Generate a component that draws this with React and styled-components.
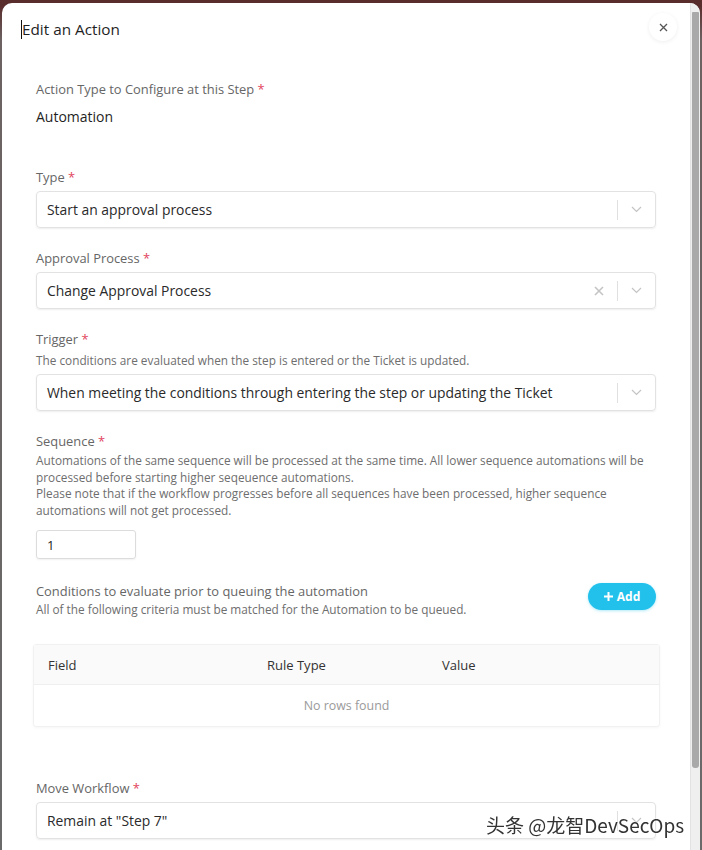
import React from "react";
import styled, { createGlobalStyle } from "styled-components";

const Global = createGlobalStyle`
  html, body { margin: 0; padding: 0; }
  body {
    background: linear-gradient(to bottom, #5a2d2d 0, #5a2d2d 6px, #6c6262 40px, #6a6a6a 100%);
    font-family: "Open Sans", "Noto Sans", sans-serif;
    height: 850px;
    overflow: hidden;
  }
  * { box-sizing: border-box; }
`;

const Modal = styled.div`
  position: relative;
  margin: 3px 2px 0 2px;
  height: 847px;
  background: #fff;
  border-radius: 10px 10px 0 0;
  overflow: hidden;
  display: flex;
`;

const Content = styled.div`
  flex: 1;
  min-width: 0;
  overflow: hidden;
`;

const ScrollTrack = styled.div`
  width: 10px;
  background: #efefef;
  border-left: 1px solid #e2e2e2;
  padding: 9px 1px 0 1px;
  display: flex;
  flex-direction: column;
`;

const ScrollThumb = styled.div`
  height: 756px;
  background: #a9a9a9;
  border-radius: 1px 1px 3px 3px;
`;

const Header = styled.div`
  display: flex;
  align-items: center;
  justify-content: space-between;
  height: 56px;
  padding: 0 13px 4px 19px;
`;

const Title = styled.h2`
  margin: 0;
  display: flex;
  align-items: center;
  font-size: 15.3px;
  font-weight: 400;
  color: #1f1f1f;
`;

const Caret = styled.span`
  display: inline-block;
  width: 1px;
  height: 19px;
  background: #111;
`;

const CloseBtn = styled.button`
  width: 28px;
  height: 28px;
  margin-bottom: 4px;
  border: none;
  border-radius: 50%;
  background: #fff;
  box-shadow: 0 1px 4px rgba(0, 0, 0, 0.07);
  display: flex;
  align-items: center;
  justify-content: center;
  padding: 0;
  color: #555;
`;

const Body = styled.div`
  padding: 21px 34px 110px 34px;
  display: flex;
  flex-direction: column;
`;

const Label = styled.div`
  font-size: 12.9px;
  line-height: 18px;
  color: #666;
  margin-top: ${(p) => p.$mt || 0}px;
  white-space: nowrap;
`;

const Req = styled.span`
  color: #e2445c;
`;

const Value = styled.div`
  font-size: 14px;
  line-height: 20px;
  color: #1f1f1f;
  margin-top: 9px;
`;

const Hint = styled.div`
  font-size: 11.8px;
  line-height: ${(p) => p.$lh || 16}px;
  color: #6e6e6e;
  margin-top: ${(p) => p.$mt || 0}px;
`;

const SelectBox = styled.div`
  margin-top: ${(p) => p.$mt ?? 5}px;
  height: 37px;
  border: 1px solid #e2e2e2;
  border-radius: 4px;
  box-shadow: 0 1px 2px rgba(0, 0, 0, 0.07);
  display: flex;
  align-items: center;
  padding-left: 10px;
  font-size: 13.9px;
  color: #2a2a2a;
`;

const SelectText = styled.span`
  flex: 1;
  white-space: nowrap;
`;

const IconSlot = styled.span`
  display: flex;
  align-items: center;
  justify-content: center;
  width: ${(p) => p.$w}px;
  height: 100%;
  color: #c4c4c4;
`;

const Sep = styled.span`
  width: 1px;
  height: 20px;
  background: #e0e0e0;
`;

const NumInput = styled.div`
  margin-top: 12px;
  width: 100px;
  height: 29px;
  border: 1px solid #dcdcdc;
  border-radius: 3px;
  box-shadow: 0 1px 2px rgba(0, 0, 0, 0.06);
  padding-left: 10px;
  display: flex;
  align-items: center;
  font-size: 13px;
  color: #222;
`;

const CondRow = styled.div`
  display: flex;
  justify-content: space-between;
  align-items: flex-start;
  margin-top: 23px;
`;

const AddBtn = styled.button`
  margin-top: 1px;
  height: 27px;
  width: 68px;
  border: none;
  border-radius: 14px;
  background: #22c1ec;
  color: #fff;
  font-family: inherit;
  font-weight: 700;
  font-size: 12px;
  display: flex;
  align-items: center;
  justify-content: center;
  gap: 4px;
  box-shadow: 0 1px 3px rgba(34, 193, 236, 0.35);
`;

const Table = styled.div`
  margin: 27px -4px 0 -3px;
  border: 1px solid #f1f1f1;
  border-radius: 3px;
  box-shadow: 0 1px 3px rgba(0, 0, 0, 0.04);
`;

const HeadRow = styled.div`
  display: grid;
  grid-template-columns: 219px 175px 1fr;
  height: 40px;
  align-items: center;
  background: #fafafa;
  border-bottom: 1px solid #efefef;
  font-size: 13px;
  color: #333;
`;

const HeadCell = styled.div`
  padding-left: 14px;
`;

const Empty = styled.div`
  height: 41px;
  display: flex;
  align-items: center;
  justify-content: center;
  font-size: 12.4px;
  color: #9a9a9a;
`;

const Watermark = styled.div`
  position: fixed;
  left: 486px;
  top: 811px;
  font-family: "Noto Sans CJK SC", "Noto Sans", sans-serif;
  font-size: 19px;
  color: #333;
  text-shadow: 0 0 2px #fff, 0 0 1px #fff;
  white-space: nowrap;
  pointer-events: none;
`;

const Chevron = () => (
  <svg width="11" height="7" viewBox="0 0 11 7" fill="none">
    <path d="M1 1l4.5 4.5L10 1" stroke="currentColor" strokeWidth="1.2" />
  </svg>
);

const ClearX = () => (
  <svg width="10" height="10" viewBox="0 0 10 10" fill="none">
    <path d="M1 1l8 8M9 1L1 9" stroke="currentColor" strokeWidth="1.6" />
  </svg>
);

const Select = ({ value, clearable, mt }) => (
  <SelectBox $mt={mt}>
    <SelectText>{value}</SelectText>
    {clearable && (
      <IconSlot $w={36}>
        <ClearX />
      </IconSlot>
    )}
    <Sep />
    <IconSlot $w={37}>
      <Chevron />
    </IconSlot>
  </SelectBox>
);

export default function App() {
  return (
    <>
      <Global />
      <Modal>
        <Content>
          <Header>
            <Title>
              <Caret />
              Edit an Action
            </Title>
            <CloseBtn aria-label="close">
              <svg width="9" height="9" viewBox="0 0 9 9" fill="none">
                <path d="M1 1l7 7M8 1L1 8" stroke="currentColor" strokeWidth="1.3" />
              </svg>
            </CloseBtn>
          </Header>
          <Body>
            <Label>
              Action Type to Configure at this Step <Req>*</Req>
            </Label>
            <Value>Automation</Value>

            <Label $mt={41}>
              Type <Req>*</Req>
            </Label>
            <Select value="Start an approval process" />

            <Label $mt={21}>
              Approval Process <Req>*</Req>
            </Label>
            <Select value="Change Approval Process" clearable />

            <Label $mt={21}>
              Trigger <Req>*</Req>
            </Label>
            <Hint $mt={4}>The conditions are evaluated when the step is entered or the Ticket is updated.</Hint>
            <Select value="When meeting the conditions through entering the step or updating the Ticket" mt={6} />

            <Label $mt={21}>
              Sequence <Req>*</Req>
            </Label>
            <Hint $mt={2} $lh={16.6}>
              Automations of the same sequence will be processed at the same time. All lower sequence automations will be
              processed before starting higher seqeuence automations.
              <br />
              Please note that if the workflow progresses before all sequences have been processed, higher sequence
              automations will not get processed.
            </Hint>
            <NumInput>1</NumInput>

            <CondRow>
              <div>
                <Label>Conditions to evaluate prior to queuing the automation</Label>
                <Hint $mt={1}>All of the following criteria must be matched for the Automation to be queued.</Hint>
              </div>
              <AddBtn>
                <svg width="9" height="9" viewBox="0 0 9 9">
                  <path d="M4.5 0v9M0 4.5h9" stroke="#fff" strokeWidth="2" />
                </svg>
                Add
              </AddBtn>
            </CondRow>

            <Table>
              <HeadRow>
                <HeadCell>Field</HeadCell>
                <HeadCell>Rule Type</HeadCell>
                <HeadCell>Value</HeadCell>
              </HeadRow>
              <Empty>No rows found</Empty>
            </Table>

            <Label $mt={52}>
              Move Workflow <Req>*</Req>
            </Label>
            <Select value={'Remain at "Step 7"'} />
          </Body>
        </Content>
        <ScrollTrack>
          <ScrollThumb />
        </ScrollTrack>
      </Modal>
      <Watermark>头条 @龙智DevSecOps</Watermark>
    </>
  );
}
